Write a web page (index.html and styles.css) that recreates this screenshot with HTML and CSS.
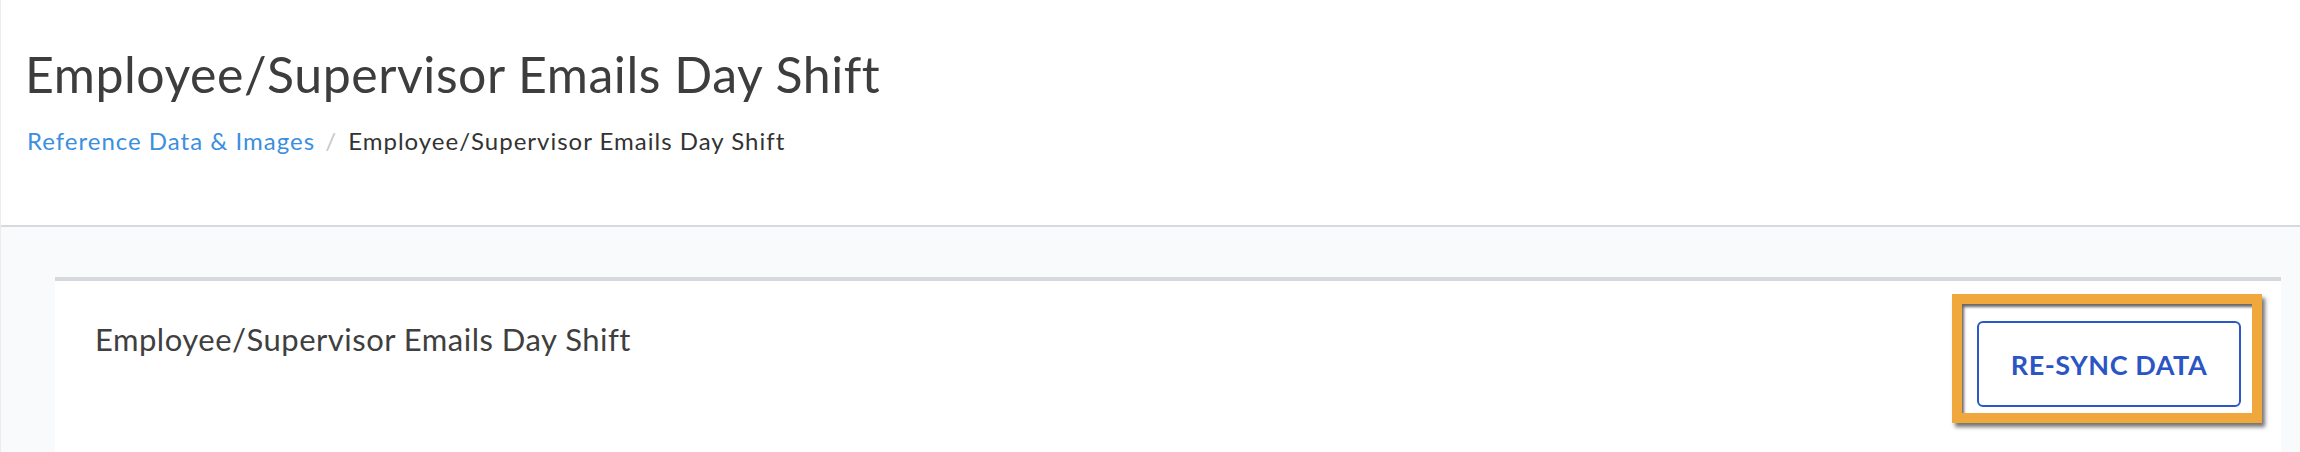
FILE: index.html
```html
<!DOCTYPE html>
<html lang="en">
<head>
  <meta charset="UTF-8" />
  <meta name="viewport" content="width=device-width, initial-scale=1.0" />
  <title>Employee/Supervisor Emails Day Shift</title>
  <link rel="stylesheet" href="styles.css">
</head>
<body>

  <div class="page">
    <header class="page-header">
      <h1>Employee/Supervisor Emails Day Shift</h1>
      <nav class="breadcrumb">
        <a href="#">Reference Data &amp; Images</a>
        <span class="sep">/</span>
        <span class="current">Employee/Supervisor Emails Day Shift</span>
      </nav>
    </header>

    <main class="content">
      <section class="card">
        <h2>Employee/Supervisor Emails Day Shift</h2>
        <!-- highlight frame around the action -->
        <div class="highlight">
          <button type="button" class="btn-outline">RE-SYNC DATA</button>
        </div>
      </section>
    </main>
  </div>

</body>
</html>
```

FILE: styles.css
```css
* {
  box-sizing: border-box;
}

body {
  margin: 0;
  font-family: 'Lato', 'Open Sans', sans-serif;
  background-color: #f9fafc;
  color: #3d3d3d;
  height: 452px;
  overflow: hidden;
}

.page {
  border-left: 1px solid #ececec;
  min-height: 452px;
}

.page-header {
  background-color: #fff;
  height: 227px;
  padding: 44px 24px 0;
  border-bottom: 2px solid #d6d9dd;
}

h1 {
  margin: 0;
  font-size: 50px;
  font-weight: 400;
  line-height: 1.2;
  letter-spacing: 0.55px;
  color: #3d3d3d;
}

.breadcrumb {
  margin-top: 23px;
  padding-left: 2px;
  font-size: 24px;
  line-height: 1.2;
  letter-spacing: 1px;
}

.breadcrumb a {
  color: #3b8fde;
  text-decoration: none;
}

.breadcrumb .sep {
  color: #c9c9c9;
  margin: 0 4px 0 3px;
}

.breadcrumb .current {
  color: #333;
}

.content {
  padding: 50px 19px 0 54px;
}

.card {
  background-color: #fff;
  border-top: 4px solid #d5d8dc;
  height: 175px;
  display: flex;
  justify-content: space-between;
  align-items: flex-start;
  padding: 13px 19px 0 40px;
}

.card h2 {
  margin: 27px 0 0;
  font-size: 31px;
  font-weight: 400;
  line-height: 1.2;
  letter-spacing: 0.5px;
  color: #3f3f3f;
}

.highlight {
  border: 10px solid #f0a83d;
  padding: 17px 11px 6px 15px;
  box-shadow: 3px 4px 4px rgba(0, 0, 0, 0.55), inset 3px 4px 3px -1px rgba(0, 0, 0, 0.6);
}

.btn-outline {
  display: block;
  width: 264px;
  height: 86px;
  border: 2px solid #2b57c8;
  border-radius: 6px;
  background: #fff;
  color: #2b55c5;
  font-family: 'Lato', sans-serif;
  font-weight: 700;
  font-size: 27px;
  letter-spacing: 0.55px;
  cursor: pointer;
}
```
